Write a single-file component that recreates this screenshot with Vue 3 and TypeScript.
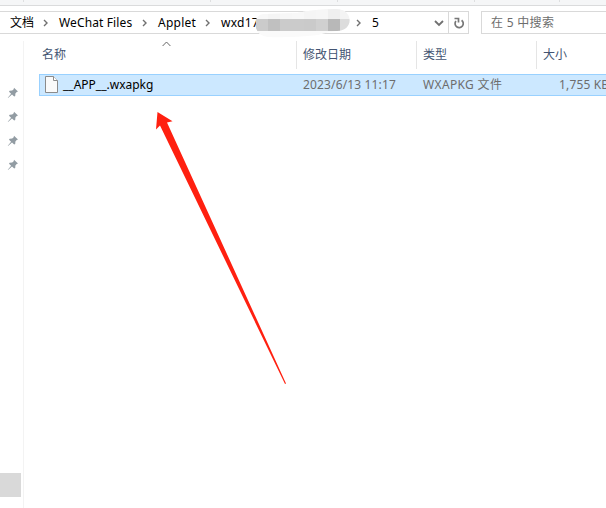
<script setup lang="ts">
interface Crumb { label: string; width: number; masked?: boolean }

const crumbs: Crumb[] = [
  { label: '文档', width: 25 },
  { label: 'WeChat Files', width: 75 },
  { label: 'Applet', width: 39 },
  { label: 'wxd17', width: 127, masked: true },
  { label: '5', width: 10 },
]
const mosaic: string[] = ['#cbcbcb', '#c0c0c0', '#cbcbcb', '#cbcbcb', '#cacaca', '#d0d0d0', '#b8b8b8', '#dcdcdc']
const mosaicTop: string[] = ['#f8f8f8', '#f5f5f5', '#f7f7f7', '#f8f8f8', '#f5f5f5', '#f6f6f6', '#efefef', '#f4f4f4']
const pins: number[] = [1, 2, 3, 4]
</script>

<template>
  <div class="window">
    <div class="ribbon"><i></i><i></i><i></i><i></i><i></i></div>
    <div class="toolbar">
      <div class="address">
        <div class="crumbs">
          <template v-for="(c, i) in crumbs" :key="c.label">
            <svg v-if="i" class="chev" width="6" height="8" viewBox="0 0 6 8"><path d="M1 1l3 3-3 3" /></svg>
            <span class="crumb" :class="'c' + i" :style="{ width: c.width + 'px' }">{{ c.label }}
              <svg v-if="c.masked" class="mask" width="96" height="29" viewBox="0 0 96 29">
                <defs><clipPath id="smear"><path d="M1 15Q0 6 9 5L42 4Q60 0 81 0C99 0 99 22 82 22Q72 23 63 26Q35 29 13 28Q3 27 1 19Z" /></clipPath></defs>
                <g clip-path="url(#smear)">
                  <rect width="96" height="29" fill="#fafafa" />
                  <rect v-for="(m, k) in mosaicTop" :key="'t' + k" :x="k * 12 + 1" y="0" width="12" height="10" :fill="m" />
                  <rect v-for="(m, k) in mosaic" :key="k" :x="k * 12 + 1" y="10" width="12" height="12" :fill="m" />
                </g>
              </svg>
            </span>
          </template>
        </div>
        <svg class="down" width="10" height="8" viewBox="0 0 10 8"><path d="M1 2l4 4 4-4" /></svg>
        <div class="refresh">
          <svg width="12" height="14" viewBox="0 0 12 14"><path d="M2.9 5A4.1 4.1 0 1 0 8.6 4.2" /><path d="M1.5 2.5H5.5V6.5" /></svg>
        </div>
      </div>
      <div class="search">在 5 中搜索</div>
    </div>
    <div class="body">
      <aside>
        <svg v-for="p in pins" :key="p" class="pin" width="12" height="12" viewBox="0 0 12 12"><path d="M7 0.8L11 4.6 9.7 5.1 8.4 6.6 8.2 9 7.2 9.6 5 7.6 1 11 0.8 10.7 4.1 6.7 2 4.7 2.6 3.7 5.2 3.6 6.7 2.2Z" /></svg>
        <div class="thumb"></div>
      </aside>
      <main>
        <div class="grid head">
          <div class="name">名称<svg class="sort" width="9" height="6" viewBox="0 0 9 6"><path d="M.6 5L4.5 1l3.9 4" /></svg></div>
          <div>修改日期</div>
          <div>类型</div>
          <div>大小</div>
        </div>
        <div class="grid row">
          <div class="file">
            <svg width="13" height="17" viewBox="0 0 13 17"><path d="M.5.5h8l4 4v12H.5z" fill="#fafafa" stroke="#8b8b8b" /><path d="M8.5.5v4h4" fill="#fff" stroke="#8b8b8b" /></svg>
            <span class="fname">__APP__.wxapkg</span>
          </div>
          <div class="date">2023/6/13 11:17</div>
          <div class="type">WXAPKG 文件</div>
          <div class="size">1,755 KB</div>
        </div>
      </main>
    </div>
    <svg class="arrow" width="132" height="276" viewBox="0 0 132 276"><path d="M2.5 2L17.5 11.2 12 12.5 131 273.5 130 274 5 15.5 1 19.5Z" /></svg>
  </div>
</template>

<style>
html, body { margin: 0; overflow: hidden; background: #fff; }
</style>

<style scoped>
* { box-sizing: border-box; }
.window { position: relative; width: 606px; height: 508px; overflow: hidden; display: flex; flex-direction: column; background: #fff; color: #000; font: 12px/20px "Noto Sans", "Noto Sans CJK SC", sans-serif; white-space: nowrap; }
svg { display: block; flex: none; fill: none; }
.ribbon { height: 6px; flex: none; background: #f5f6f7; border-bottom: 1px solid #dadbdc; display: grid; grid-template-columns: 24px 187px 127px 137px 85px; }
.ribbon i { height: 2px; border-right: 1px solid #dedfe0; }
.toolbar { display: flex; flex: none; height: 23px; margin-top: 5px; gap: 12px; }
.address { width: 469px; border: 1px solid #d9d9d9; border-left: 0; display: flex; align-items: center; }
.crumbs { flex: 1; display: flex; align-items: center; padding-left: 10px; }
.crumb { position: relative; height: 20px; }
.c1 { letter-spacing: .12px; }
.c2, .c3 { letter-spacing: .25px; }
.chev { margin: 1px 10px 0 8px; stroke: #707070; stroke-width: 1.4; }
.mask { position: absolute; left: 34px; top: -4px; }
.down { margin-right: 4px; stroke: #707070; stroke-width: 1.8; }
.refresh { width: 20px; height: 21px; border-left: 1px solid #d9d9d9; display: grid; place-items: center; stroke: #777; stroke-width: 1.7; }
.search { flex: 1; border: 1px solid #d9d9d9; border-right: 0; padding-left: 9px; line-height: 21px; letter-spacing: .3px; color: #6d6d6d; }
.body { flex: 1; display: flex; margin-top: 7px; }
aside { width: 24px; border-right: 1px solid #f3f3f3; padding-top: 46px; display: flex; flex-direction: column; gap: 12px; }
.pin { margin-left: 7px; fill: #929ca3; }
.thumb { width: 21px; height: 24px; margin-top: 290px; background: #d9d9d9; }
main { flex: 1; min-width: 0; padding-left: 15px; }
.grid { display: grid; grid-template-columns: 257px 120px 120px 70px; }
.head { height: 27px; color: #435472; line-height: 28px; }
.head > div { padding-left: 6px; border-left: 1px solid #e5e5e5; }
.head > .name { position: relative; border-left: 0; padding-left: 3px; }
.sort { position: absolute; left: 123px; top: 0; stroke: #666; }
.row { height: 22px; margin-top: 6px; border: 1px solid #99d1ff; border-right: 0; background: #cce8ff; color: #6d6d6d; }
.row > div { padding-left: 6px; }
.row > .file { display: flex; align-items: center; gap: 6px; padding-left: 5px; color: #000; }
.row > .file svg { margin-top: -2px; }
.fname { margin-left: -1px; }
.row > .date { letter-spacing: .15px; }
.row > .type { letter-spacing: .35px; }
.row > .size { padding-left: 22px; letter-spacing: .15px; }
.arrow { position: absolute; left: 155px; top: 110px; fill: #ff2010; }
</style>
